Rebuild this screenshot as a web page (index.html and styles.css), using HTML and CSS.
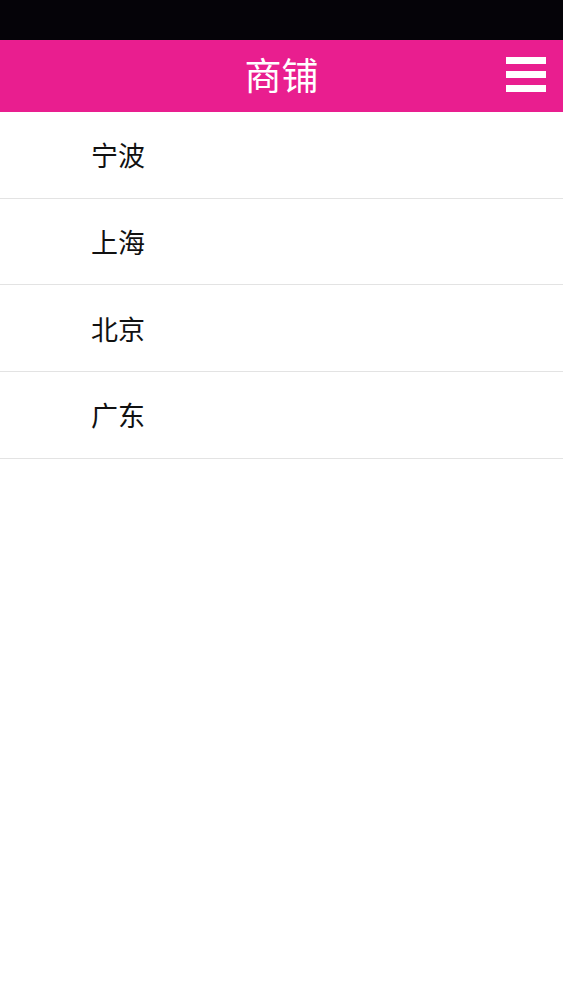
FILE: index.html
```html
<!DOCTYPE html>
<html lang="zh">
<head>
<meta charset="utf-8">
<title>商铺</title>
<link rel="stylesheet" href="styles.css">
</head>
<body>
<div class="statusbar"></div>
<header class="topbar">
  <h1 class="title">商铺</h1>
  <button class="menu" aria-label="menu">
    <span class="bar"></span><span class="bar"></span><span class="bar"></span>
  </button>
</header>
<ul class="list">
  <li class="item">宁波</li>
  <li class="item">上海</li>
  <li class="item">北京</li>
  <li class="item">广东</li>
</ul>
</body>
</html>
```
FILE: styles.css
```css
html, body {
  margin: 0;
  padding: 0;
  background: #ffffff;
  font-family: "Noto Sans CJK SC", "Noto Sans", sans-serif;
}
.statusbar {
  height: 40px;
  background: #050308;
}
.topbar {
  height: 72px;
  box-sizing: border-box;
  padding-bottom: 4px;
  background: #e91e8f;
  display: flex;
  align-items: center;
  justify-content: center;
  position: relative;
}
.title {
  margin: 0;
  color: #ffffff;
  font-size: 37px;
  font-weight: 400;
  line-height: 1;
}
.menu {
  position: absolute;
  right: 17px;
  top: 17px;
  width: 40px;
  padding: 0;
  border: 0;
  background: transparent;
  display: flex;
  flex-direction: column;
  gap: 7px;
}
.bar {
  display: block;
  height: 7px;
  background: #ffffff;
}
.list {
  list-style: none;
  margin: 0;
  padding: 0;
}
.item {
  height: 86.7px;
  box-sizing: border-box;
  border-bottom: 1px solid #e3e3e3;
  display: flex;
  align-items: center;
  padding-left: 91px;
  font-size: 27px;
  color: #111111;
}
```
